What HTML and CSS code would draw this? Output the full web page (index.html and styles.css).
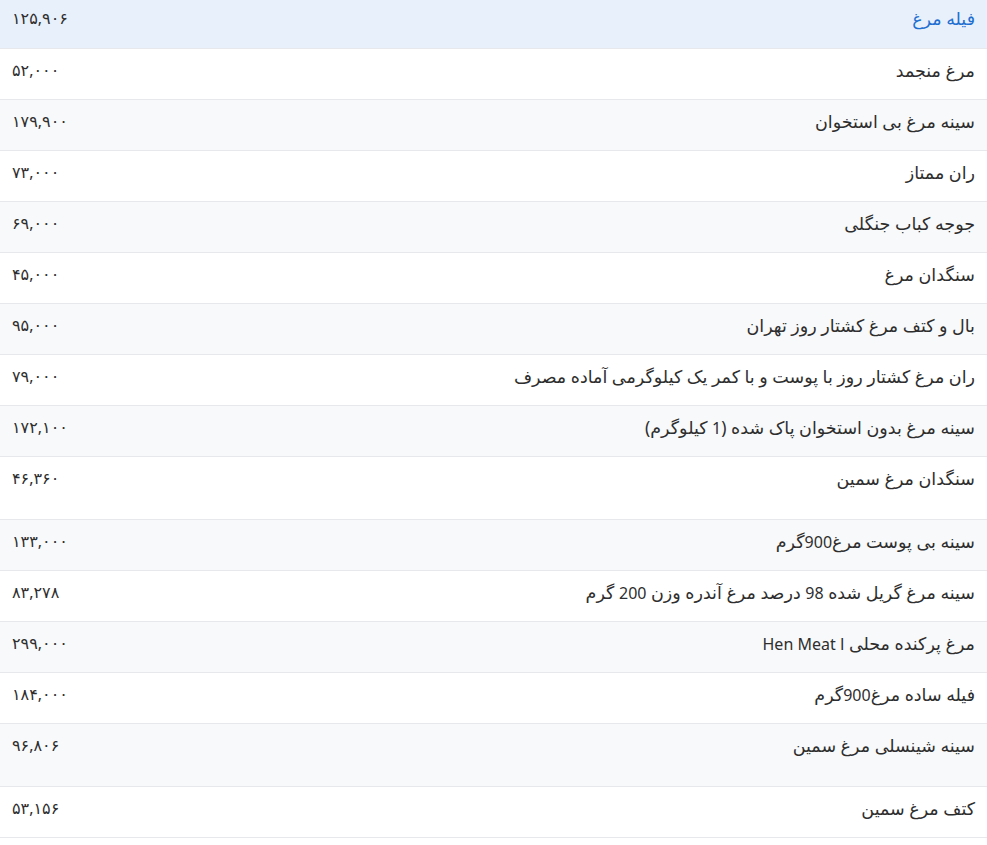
FILE: index.html
```html
<!DOCTYPE html>
<html lang="fa" dir="rtl">
<head>
<meta charset="utf-8">
<title>قیمت مرغ</title>
<link rel="stylesheet" href="styles.css">
</head>
<body>
<table class="prices">
  <tbody>
    <tr class="row active"><td class="name">فیله مرغ</td><td class="price">۱۲۵,۹۰۶</td></tr>
    <tr class="row"><td class="name">مرغ منجمد</td><td class="price">۵۲,۰۰۰</td></tr>
    <tr class="row"><td class="name">سینه مرغ بی استخوان</td><td class="price">۱۷۹,۹۰۰</td></tr>
    <tr class="row"><td class="name">ران ممتاز</td><td class="price">۷۳,۰۰۰</td></tr>
    <tr class="row"><td class="name">جوجه کباب جنگلی</td><td class="price">۶۹,۰۰۰</td></tr>
    <tr class="row"><td class="name">سنگدان مرغ</td><td class="price">۴۵,۰۰۰</td></tr>
    <tr class="row"><td class="name">بال و کتف مرغ کشتار روز تهران</td><td class="price">۹۵,۰۰۰</td></tr>
    <tr class="row"><td class="name">ران مرغ کشتار روز با پوست و با کمر یک کیلوگرمی آماده مصرف</td><td class="price">۷۹,۰۰۰</td></tr>
    <tr class="row"><td class="name">سینه مرغ بدون استخوان پاک شده (<span class="latin">1</span> کیلوگرم)</td><td class="price">۱۷۲,۱۰۰</td></tr>
    <tr class="row tall"><td class="name">سنگدان مرغ سمین</td><td class="price">۴۶,۳۶۰</td></tr>
    <tr class="row"><td class="name">سینه بی پوست مرغ<span class="latin">900</span>گرم</td><td class="price">۱۳۳,۰۰۰</td></tr>
    <tr class="row"><td class="name">سینه مرغ گریل شده <span class="latin">98</span> درصد مرغ آندره وزن <span class="latin">200</span> گرم</td><td class="price">۸۳,۲۷۸</td></tr>
    <tr class="row"><td class="name">مرغ پرکنده محلی <span class="latin">ا Hen Meat</span></td><td class="price">۲۹۹,۰۰۰</td></tr>
    <tr class="row"><td class="name">فیله ساده مرغ<span class="latin">900</span>گرم</td><td class="price">۱۸۴,۰۰۰</td></tr>
    <tr class="row tall"><td class="name">سینه شینسلی مرغ سمین</td><td class="price">۹۶,۸۰۶</td></tr>
    <tr class="row"><td class="name">کتف مرغ سمین</td><td class="price">۵۳,۱۵۶</td></tr>
  </tbody>
</table>
</body>
</html>
```

FILE: styles.css
```css
html, body {
  margin: 0;
  padding: 0;
  background: #ffffff;
}
body {
  font-family: "Noto Sans", "DejaVu Sans", sans-serif;
  font-size: 16px;
  color: #2e2e2e;
  overflow: hidden;
}
.prices {
  width: 100%;
  border-collapse: collapse;
  margin-top: -3px;
}
.row td {
  height: 51px;
  box-sizing: border-box;
  padding: 8px 12px 0 12px;
  vertical-align: top;
  line-height: 26px;
  border-bottom: 1px solid #e6e8eb;
}
.row:nth-child(odd) td {
  background: #f8f9fa;
}
.row:nth-child(even) td {
  background: #ffffff;
}
.row.tall td {
  height: 63px;
}
.row.active td {
  background: #e8f0fb;
}
.row.active .name {
  color: #1f6fd1;
}
.name {
  text-align: right;
  font-size: 17.5px;
}
.latin {
  font-size: 16px;
}
.price {
  text-align: left;
  width: 120px;
  white-space: nowrap;
}
```
